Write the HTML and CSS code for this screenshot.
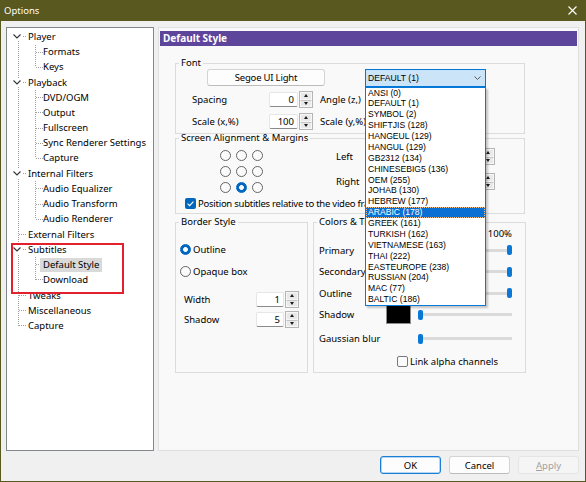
FILE: index.html
```html
<!DOCTYPE html>
<html lang="en">
<head>
  <meta charset="UTF-8">
  <title>Options</title>
  <link rel="stylesheet" href="styles.css">
</head>
<body>
  <div class="window">
    <div class="titlebar">
      <span class="title">Options</span>
      <svg class="close" width="9" height="9" viewBox="0 0 9 9"><path d="M0.5 0.5L8.5 8.5M8.5 0.5L0.5 8.5" stroke="#fff" stroke-width="1.1"/></svg>
    </div>

    <div class="client">
      <div class="panes">
        <!-- navigation tree -->
        <div class="tree">
          <ul class="tree-root">
            <li>
              <div class="node branch"><svg class="twisty" width="8" height="9" viewBox="0 0 8 9"><rect width="8" height="9" fill="#fff"/><path d="M0.5 2.5L4 6L7.5 2.5" fill="none" stroke="#333" stroke-width="1.1"/></svg><span>Player</span></div>
              <ul class="tree-sub">
                <li class="node child"><span>Formats</span></li>
                <li class="node child"><span>Keys</span></li>
              </ul>
            </li>
            <li>
              <div class="node branch"><svg class="twisty" width="8" height="9" viewBox="0 0 8 9"><rect width="8" height="9" fill="#fff"/><path d="M0.5 2.5L4 6L7.5 2.5" fill="none" stroke="#333" stroke-width="1.1"/></svg><span>Playback</span></div>
              <ul class="tree-sub">
                <li class="node child"><span>DVD/OGM</span></li>
                <li class="node child"><span>Output</span></li>
                <li class="node child"><span>Fullscreen</span></li>
                <li class="node child"><span>Sync Renderer Settings</span></li>
                <li class="node child"><span>Capture</span></li>
              </ul>
            </li>
            <li>
              <div class="node branch"><svg class="twisty" width="8" height="9" viewBox="0 0 8 9"><rect width="8" height="9" fill="#fff"/><path d="M0.5 2.5L4 6L7.5 2.5" fill="none" stroke="#333" stroke-width="1.1"/></svg><span>Internal Filters</span></div>
              <ul class="tree-sub">
                <li class="node child"><span>Audio Equalizer</span></li>
                <li class="node child"><span>Audio Transform</span></li>
                <li class="node child"><span>Audio Renderer</span></li>
              </ul>
            </li>
            <li class="node leaf"><span>External Filters</span></li>
            <li>
              <div class="node branch"><svg class="twisty" width="8" height="9" viewBox="0 0 8 9"><rect width="8" height="9" fill="#fff"/><path d="M0.5 2.5L4 6L7.5 2.5" fill="none" stroke="#333" stroke-width="1.1"/></svg><span>Subtitles</span></div>
              <ul class="tree-sub">
                <li class="node child"><span class="selected">Default Style</span></li>
                <li class="node child"><span>Download</span></li>
              </ul>
            </li>
            <li class="node leaf"><span>Tweaks</span></li>
            <li class="node leaf"><span>Miscellaneous</span></li>
            <li class="node leaf"><span>Capture</span></li>
          </ul>
          <div class="callout"></div>
        </div>

        <!-- property page -->
        <div class="page">
          <div class="page-title">Default Style</div>
          <div class="page-body">
            <fieldset class="group font-group">
              <legend>Font</legend>
              <div class="font-row">
                <div class="btn font-btn">Segoe UI Light</div>
                <div class="combo">
                  <span>DEFAULT (1)</span>
                  <svg width="7" height="4" viewBox="0 0 7 4"><path d="M0.5 0.5L3.5 3.5L6.5 0.5" fill="none" stroke="#5a5a5a" stroke-width="1"/></svg>
                  <ul class="combo-list">
                    <li>ANSI (0)</li>
                    <li>DEFAULT (1)</li>
                    <li>SYMBOL (2)</li>
                    <li>SHIFTJIS (128)</li>
                    <li>HANGEUL (129)</li>
                    <li>HANGUL (129)</li>
                    <li>GB2312 (134)</li>
                    <li>CHINESEBIG5 (136)</li>
                    <li>OEM (255)</li>
                    <li>JOHAB (130)</li>
                    <li>HEBREW (177)</li>
                    <li class="active">ARABIC (178)</li>
                    <li>GREEK (161)</li>
                    <li>TURKISH (162)</li>
                    <li>VIETNAMESE (163)</li>
                    <li>THAI (222)</li>
                    <li>EASTEUROPE (238)</li>
                    <li>RUSSIAN (204)</li>
                    <li>MAC (77)</li>
                    <li>BALTIC (186)</li>
                  </ul>
                </div>
              </div>
              <div class="field-row">
                <span class="lbl font-lbl">Spacing</span>
                <div class="spin"><span class="spin-val">0</span><span class="spin-btns"><i class="up"></i><i class="down"></i></span></div>
                <span class="lbl side-lbl">Angle (z,)</span>
                <div class="spin"><span class="spin-val">0</span><span class="spin-btns"><i class="up"></i><i class="down"></i></span></div>
              </div>
              <div class="field-row">
                <span class="lbl font-lbl">Scale (x,%)</span>
                <div class="spin"><span class="spin-val">100</span><span class="spin-btns"><i class="up"></i><i class="down"></i></span></div>
                <span class="lbl side-lbl">Scale (y,%)</span>
                <div class="spin"><span class="spin-val">100</span><span class="spin-btns"><i class="up"></i><i class="down"></i></span></div>
              </div>
            </fieldset>

            <fieldset class="group align-group">
              <legend>Screen Alignment &amp; Margins</legend>
              <div class="align-row">
                <div class="radio-grid">
                  <span class="radio"></span><span class="radio"></span><span class="radio"></span>
                  <span class="radio"></span><span class="radio"></span><span class="radio"></span>
                  <span class="radio"></span><span class="radio on"></span><span class="radio"></span>
                </div>
                <div class="margins">
                  <div class="margin-row">
                    <span class="lbl margin-lbl">Left</span>
                    <div class="spin wide"><span class="spin-val">10</span><span class="spin-btns"><i class="up"></i><i class="down"></i></span></div>
                  </div>
                  <div class="margin-row">
                    <span class="lbl margin-lbl">Right</span>
                    <div class="spin wide"><span class="spin-val">10</span><span class="spin-btns"><i class="up"></i><i class="down"></i></span></div>
                  </div>
                </div>
              </div>
              <div class="check-row relative-row">
                <span class="check on"><svg width="11" height="11" viewBox="0 0 11 11"><path d="M2.6 5.6L4.6 7.6L8.4 3.6" fill="none" stroke="#fff" stroke-width="1.1"/></svg></span>
                <span>Position subtitles relative to the video frame</span>
              </div>
            </fieldset>

            <div class="lower">
              <fieldset class="group border-group">
                <legend>Border Style</legend>
                <div class="option-row first"><span class="radio on"></span><span>Outline</span></div>
                <div class="option-row"><span class="radio"></span><span>Opaque box</span></div>
                <div class="field-row border-row first">
                  <span class="lbl border-lbl">Width</span>
                  <div class="spin narrow"><span class="spin-val">1</span><span class="spin-btns"><i class="up"></i><i class="down"></i></span></div>
                </div>
                <div class="field-row border-row">
                  <span class="lbl border-lbl">Shadow</span>
                  <div class="spin narrow"><span class="spin-val">5</span><span class="spin-btns"><i class="up"></i><i class="down"></i></span></div>
                </div>
              </fieldset>

              <fieldset class="group colors-group">
                <legend>Colors &amp; Transparency</legend>
                <div class="alpha-head">100%</div>
                <div class="color-row">
                  <span class="lbl color-lbl">Primary</span>
                  <span class="swatch primary"></span>
                  <div class="slider"><span class="thumb max"></span></div>
                </div>
                <div class="color-row">
                  <span class="lbl color-lbl">Secondary</span>
                  <span class="swatch secondary"></span>
                  <div class="slider"><span class="thumb max"></span></div>
                </div>
                <div class="color-row">
                  <span class="lbl color-lbl">Outline</span>
                  <span class="swatch outline"></span>
                  <div class="slider"><span class="thumb max"></span></div>
                </div>
                <div class="color-row">
                  <span class="lbl color-lbl">Shadow</span>
                  <span class="swatch shadow"></span>
                  <div class="slider"><span class="thumb"></span></div>
                </div>
                <div class="color-row blur-row">
                  <span class="lbl color-lbl">Gaussian blur</span>
                  <span class="swatch empty"></span>
                  <div class="slider"><span class="thumb"></span></div>
                </div>
                <div class="check-row link-row">
                  <span class="check"></span>
                  <span>Link alpha channels</span>
                </div>
              </fieldset>
            </div>
          </div>
        </div>
      </div>

      <div class="buttons">
        <div class="btn dlg-btn default">OK</div>
        <div class="btn dlg-btn">Cancel</div>
        <div class="btn dlg-btn disabled"><u>A</u>pply</div>
      </div>
    </div>
  </div>
</body>
</html>
```

FILE: styles.css
```css
* {
  box-sizing: border-box;
}

html,
body {
  margin: 0;
  padding: 0;
  background: #58581f;
}

body {
  font-family: "Noto Sans", sans-serif;
  font-size: 9.5px;
  color: #000;
}

ul {
  list-style: none;
  margin: 0;
  padding: 0;
}

.window {
  width: 586px;
  height: 482px;
  border: 1px solid #58581f;
  border-top: 0;
  background: #f0f0f0;
  display: flex;
  flex-direction: column;
}

/* title bar */
.titlebar {
  height: 21px;
  flex-shrink: 0;
  background: #58581f;
  color: #fff;
  display: flex;
  align-items: center;
  justify-content: space-between;
  padding: 0 8px 0 3px;
}

.client {
  flex: 1;
  display: flex;
  flex-direction: column;
  padding: 6px 6px 0 5px;
}

.panes {
  display: flex;
  gap: 4px;
  height: 424px;
}

/* tree */
.tree {
  position: relative;
  width: 148px;
  height: 424px;
  background: #fff;
  border: 1px solid #82868d;
}

.tree-root {
  padding-top: 1.4px;
  background: repeating-linear-gradient(to bottom, #a0a0a0 0 1px, transparent 1px 2px) no-repeat 11px 9px / 1px 289px;
}

.tree-sub {
  background: repeating-linear-gradient(to bottom, #a0a0a0 0 1px, transparent 1px 2px) no-repeat 28px 0 / 1px calc(100% - 7.6px);
}

.node {
  height: 15.2px;
  display: flex;
  align-items: center;
  white-space: nowrap;
  background-image: repeating-linear-gradient(to right, #a0a0a0 0 1px, transparent 1px 2px);
  background-repeat: no-repeat;
}

.node.branch {
  padding-left: 6px;
  background-size: 4px 1px;
  background-position: 16px 50%;
}

.twisty {
  margin-right: 7px;
}

.node.leaf {
  padding-left: 21px;
  background-size: 8px 1px;
  background-position: 12px 50%;
}

.node.child {
  padding-left: 33px;
  background-size: 8px 1px;
  background-position: 29px 50%;
}

.node.child span {
  padding: 0 3px;
  line-height: 14px;
}

.node.child .selected {
  background: #d9d9d9;
}

.callout {
  position: absolute;
  left: 4px;
  top: 215px;
  width: 113px;
  height: 51px;
  border: 2px solid #e3202e;
}

/* property page */
.page {
  width: 421px;
  height: 424px;
  background: #f9f9f9;
  border: 1px solid #dfdfdf;
}

.page-title {
  margin: 3px 1px 0;
  height: 15px;
  line-height: 15px;
  padding-left: 3px;
  background: #5e459c;
  color: #fff;
  font-weight: bold;
  font-size: 10px;
}

.page-body {
  padding-left: 16px;
}

.group {
  margin: 0;
  padding: 0 0 4px;
  border: 1px solid #dcdcdc;
  min-width: 0;
}

.group legend {
  margin-left: 3px;
  padding: 0 2px;
  line-height: 12px;
}

.font-group {
  width: 350px;
  margin-top: 11px;
}

.align-group {
  width: 350px;
  margin-top: -2px;
}

.font-row {
  display: flex;
  align-items: center;
  height: 17px;
  margin-left: 31px;
}

.btn {
  display: flex;
  align-items: center;
  justify-content: center;
  background: #fdfdfd;
  border: 1px solid #d4d4d4;
  border-bottom-color: #bcbcbc;
  border-radius: 3px;
}

.font-btn {
  width: 118px;
  height: 17px;
  letter-spacing: -0.2px;
}

.combo {
  position: relative;
  margin-left: 40px;
  width: 121px;
  height: 18px;
  flex-shrink: 0;
  display: flex;
  align-items: center;
  justify-content: space-between;
  padding: 0 4px 0 2px;
  background: #cce4f7;
  border: 1px solid #0078d7;
  font-family: "Liberation Sans", Arial, sans-serif;
  font-size: 8.6px;
}

.combo-list {
  position: absolute;
  z-index: 10;
  left: -1px;
  top: 17px;
  width: 121px;
  background: #fff;
  border: 1px solid #0a78d6;
  box-shadow: 2px 2px 2px rgba(0, 0, 0, 0.22);
}

.combo-list li {
  height: 10.88px;
  line-height: 10.88px;
  padding-left: 2px;
  white-space: nowrap;
}

.combo-list li.active {
  background: #0a6fd2;
  color: #fff;
  outline: 1px dotted #f3c28a;
  outline-offset: -1px;
}

.field-row {
  display: flex;
  align-items: center;
  height: 15px;
  margin-top: 6px;
  margin-left: 16px;
}

.field-row + .field-row {
  margin-top: 7px;
}

.lbl {
  white-space: nowrap;
}

.font-lbl {
  width: 77px;
}

.side-lbl {
  margin-left: 7px;
  width: 66px;
}

.spin {
  display: flex;
  align-items: center;
  height: 15px;
}

.spin-val {
  width: 29px;
  height: 15px;
  line-height: 13px;
  text-align: right;
  padding-right: 3px;
  background: #fff;
  border: 1px solid #e6e6e6;
  border-bottom-color: #8a8a8a;
  border-radius: 2px;
}

.spin.wide .spin-val {
  width: 38px;
}

.spin.narrow .spin-val {
  width: 28px;
}

.spin-btns {
  width: 14px;
  height: 17px;
  margin-left: 1px;
  display: flex;
  flex-direction: column;
  border: 1px solid #b5b5b5;
  background: #e9e9e9;
}

.spin-btns i {
  flex: 1;
  display: flex;
  align-items: center;
  justify-content: center;
  border: 1px solid #f7f7f7;
}

.spin-btns i + i {
  border-top-color: #c4c4c4;
}

.spin-btns .up::before {
  content: "";
  border-left: 2.5px solid transparent;
  border-right: 2.5px solid transparent;
  border-bottom: 3px solid #1a1a1a;
}

.spin-btns .down::before {
  content: "";
  border-left: 2.5px solid transparent;
  border-right: 2.5px solid transparent;
  border-top: 3px solid #1a1a1a;
}

/* screen alignment */
.align-row {
  display: flex;
  align-items: flex-start;
}

.radio-grid {
  display: grid;
  grid-template-columns: repeat(3, 16px);
  grid-auto-rows: 16px;
  place-items: center;
  margin: 3px 0 0 41px;
}

.radio {
  display: inline-block;
  flex-shrink: 0;
  width: 11px;
  height: 11px;
  border-radius: 50%;
  border: 1px solid #636363;
  background: #fbfbfb;
}

.radio.on {
  border-color: #0067c0;
  background: radial-gradient(circle, #fff 0 2.1px, #0067c0 2.6px);
}

.margins {
  display: flex;
  flex-direction: column;
  gap: 8px;
  margin: 4px 0 0 71px;
}

.margin-row {
  display: flex;
  align-items: center;
  height: 17px;
}

.margin-lbl {
  width: 106px;
}

.check-row {
  display: flex;
  align-items: center;
  gap: 2px;
  height: 12px;
  white-space: nowrap;
}

.relative-row {
  margin: 2px 0 0 9px;
  letter-spacing: -0.25px;
}

.check {
  display: inline-flex;
  flex-shrink: 0;
  width: 11px;
  height: 11px;
  border-radius: 2px;
  border: 1px solid #7a7a7a;
  background: #fbfbfb;
}

.check.on {
  border: 0;
  background: #0067c0;
}

/* lower groups */
.lower {
  display: flex;
  gap: 5px;
  margin-top: 2px;
}

.border-group {
  width: 133px;
}

.colors-group {
  width: 213px;
  padding-bottom: 5px;
}

.option-row {
  display: flex;
  align-items: center;
  gap: 2px;
  height: 12px;
  margin: 10px 0 0 4px;
}

.option-row.first {
  margin-top: 15px;
}

.field-row.border-row {
  height: 17px;
  margin: 3px 0 0 8px;
}

.field-row.border-row.first {
  margin-top: 14px;
}

.border-lbl {
  width: 72px;
}

.alpha-head {
  height: 10px;
  line-height: 12px;
  text-align: right;
  padding-right: 13px;
}

.color-row {
  display: flex;
  align-items: center;
  height: 19px;
  margin: 2.5px 0 0 5px;
}

.color-row:first-of-type {
  margin-top: 0;
}

.color-lbl {
  width: 67px;
}

.swatch {
  width: 25px;
  height: 19px;
  border: 1px solid #8c8c8c;
}

.swatch.primary {
  background: #fff;
}

.swatch.secondary {
  background: #ff0;
}

.swatch.outline,
.swatch.shadow {
  background: #000;
}

.swatch.empty {
  border: 0;
}

.slider {
  width: 94px;
  height: 19px;
  margin-left: 7px;
  display: flex;
  align-items: center;
  background: linear-gradient(#dadada, #dadada) no-repeat 0 50% / 100% 3px;
}

.thumb {
  width: 5px;
  height: 10px;
  border-radius: 2px;
  background: #0a78d7;
}

.thumb.max {
  margin-left: auto;
}

.color-row.blur-row {
  margin-top: 5px;
}

.link-row {
  margin: 7px 0 0 83px;
}

/* dialog buttons */
.buttons {
  display: flex;
  justify-content: flex-end;
  gap: 8px;
  margin-top: 5px;
}

.dlg-btn {
  width: 61px;
  height: 18px;
}

.dlg-btn.default {
  border: 1px solid #1a7fd9;
  box-shadow: inset 0 0 0 0.5px #6aaee8;
}

.dlg-btn.disabled {
  background: #f5f5f5;
  border-color: #e5e5e5;
  color: #a0a0a0;
}
```
